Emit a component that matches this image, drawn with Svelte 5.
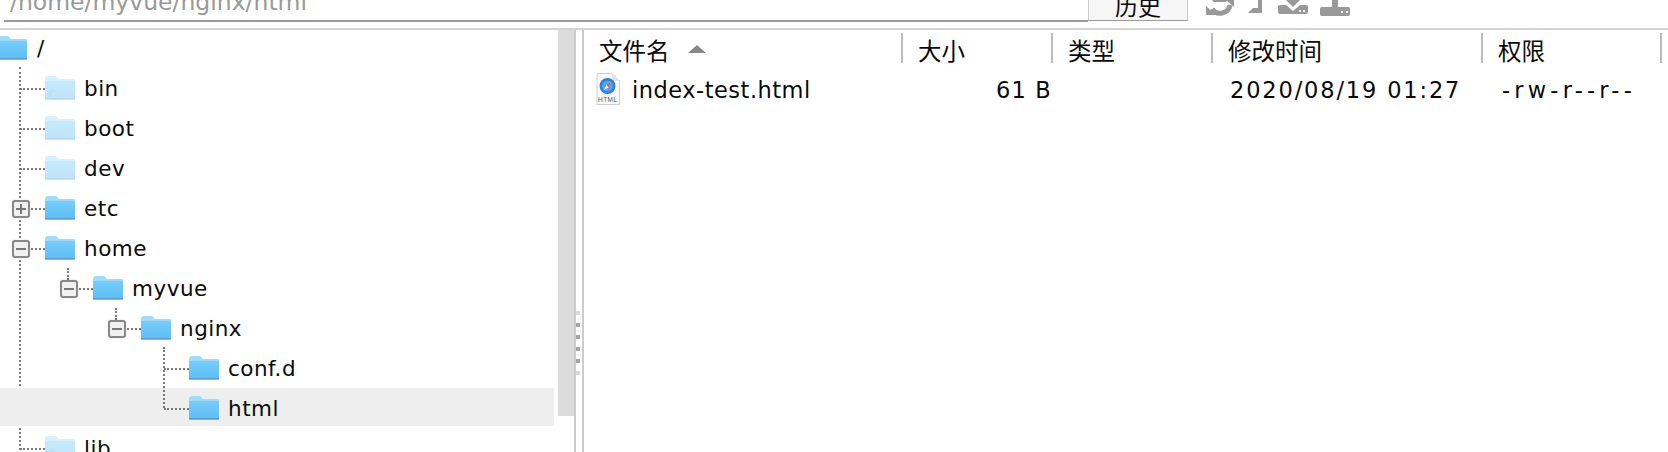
<script>
    const rows = [
        { name: "/", depth: 0, open: true },
        { name: "bin", depth: 1, faded: true, link: true },
        { name: "boot", depth: 1, faded: true },
        { name: "dev", depth: 1, faded: true },
        { name: "etc", depth: 1, box: "plus" },
        { name: "home", depth: 1, box: "minus" },
        { name: "myvue", depth: 2, box: "minus" },
        { name: "nginx", depth: 3, box: "minus" },
        { name: "conf.d", depth: 4 },
        { name: "html", depth: 4, selected: true },
        { name: "lib", depth: 1, faded: true, link: true },
    ];

    const columns = [
        { label: "文件名", width: 319, sort: true },
        { label: "大小", width: 150 },
        { label: "类型", width: 160 },
        { label: "修改时间", width: 270 },
        { label: "权限", width: 179 },
    ];
</script>

<svg class="defs" width="0" height="0">
    <defs>
        <linearGradient id="folderBody" x1="0" y1="0" x2="0" y2="1">
            <stop offset="0" stop-color="#74cdfb" />
            <stop offset="1" stop-color="#5fbef5" />
        </linearGradient>
    </defs>
</svg>

<div class="window">
    <div class="topbar">
        <div class="path"><span>/home/myvue/nginx/html</span></div>
        <div class="history">历史</div>
        <div class="tools">
            <svg width="150" height="22" viewBox="0 0 150 22">
                <!-- refresh -->
                <path d="M10 9 A10 10 0 0 0 28 5" fill="none" stroke="#999" stroke-width="5" />
                <path d="M4 6 L14 15 H4 Z" fill="#999" />
                <path d="M10 0 H26 L24 2 H12 Z" fill="#999" />
                <path d="M24 0 H32 V7 Z" fill="#999" />
                <!-- corner -->
                <path d="M56 0 H60 V13 H46 L51 8 H56 Z" fill="#999" />
                <!-- download -->
                <path d="M76 7 Q76 5 78 5 H84 L91 11 L98 5 H104 Q106 5 106 7 V12 Q106 14 104 14 H78 Q76 14 76 12 Z" fill="#999" />
                <path d="M84 0 H98 L91 7 Z" fill="#999" />
                <rect x="97" y="10" width="2" height="2" fill="#eee" />
                <rect x="101" y="10" width="2" height="2" fill="#eee" />
                <!-- upload -->
                <path d="M118 9 Q118 7 120 7 H146 Q148 7 148 9 V14 Q148 16 146 16 H120 Q118 16 118 14 Z" fill="#999" />
                <rect x="130" y="0" width="6" height="8" fill="#999" />
                <rect x="139" y="11" width="2" height="2" fill="#eee" />
                <rect x="144" y="11" width="2" height="2" fill="#eee" />
            </svg>
        </div>
    </div>

    <div class="panes">
        <div class="tree-pane">
            <div class="tree">
                <div class="trunk"></div>
                {#each rows as row}
                    <div class="row depth{row.depth}" class:selected={row.selected}>
                        {#if row.depth > 0}
                            <span class="hline"></span>
                        {/if}
                        {#if row.box}
                            <span class="box">
                                <i></i>
                                {#if row.box === "plus"}<b></b>{/if}
                            </span>
                        {/if}
                        <svg class="folder" class:faded={row.faded} width="30" height="24" viewBox="0 0 30 24">
                            <path d="M0 3 Q0 0 3 0 H10 Q12 0 13 2 L14 3 H29 Q30 3 30 4 V8 H0 Z" fill="#9fdcfb" />
                            <path d="M0 5 H29 Q30 5 30 6 V22 Q30 23.500 28.500 23.500 H1.500 Q0 23.500 0 22 Z" fill="url(#folderBody)" />
                            <rect x="0" y="22" width="30" height="1.500" fill="#4f9fd0" />
                            {#if row.link}
                                <path d="M4 23 V17 H2 L7 12 L11 15 L8 16 L6 23 Z" fill="#58b4f0" />
                            {/if}
                        </svg>
                        <span class="name">{row.name}</span>
                    </div>
                {/each}
                <div class="stub stub2"></div>
                <div class="stub stub3"></div>
                <div class="stub stub4"></div>
            </div>
            <div class="scrollbar"><div class="track"></div></div>
        </div>

        <div class="splitter">
            <div class="grip">
                {#each [0, 1, 2, 3, 4, 5] as i}
                    <span class:dim={i === 0 || i === 5}></span>
                {/each}
            </div>
        </div>

        <div class="files">
            <div class="header">
                {#each columns as col}
                    <div class="col" style="width: {col.width}px">
                        <span>{col.label}</span>
                        {#if col.sort}<span class="sort"></span>{/if}
                    </div>
                {/each}
            </div>
            <div class="file">
                <div class="cell name-cell">
                    <svg width="24" height="32" viewBox="0 0 24 32">
                        <path d="M1 0.500 H16 L23.500 8 V31.500 H1 Z" fill="#fbfbfb" stroke="#cfcfcf" />
                        <path d="M16 0.500 V8 H23.500 Z" fill="#e4e4e4" />
                        <circle cx="11.500" cy="13" r="8" fill="#2f80dc" />
                        <circle cx="11.500" cy="13" r="5.500" fill="#4ea4ee" />
                        <path d="M15 9 L12.500 14.500 L8 17 L10.500 11.500 Z" fill="#f2f2f2" />
                        <path d="M15 9 L12.500 14.500 L10.500 11.500 Z" fill="#e0533f" />
                        <text x="11.800" y="29" font-size="6.500" text-anchor="middle" fill="#555" font-family="Liberation Sans, sans-serif">HTML</text>
                    </svg>
                    <span>index-test.html</span>
                </div>
                <div class="cell size">61 B</div>
                <div class="cell type"></div>
                <div class="cell date">2020/08/19 01:27</div>
                <div class="cell perm">-rw-r--r--</div>
            </div>
        </div>
    </div>
</div>

<style>
    :global(body) {
        margin: 0;
        background: #fff;
    }

    .defs {
        position: absolute;
    }

    .window {
        width: 1668px;
        height: 452px;
        overflow: hidden;
        font-family: "DejaVu Sans", "Noto Sans CJK SC", sans-serif;
        color: #0a0a0a;
    }

    .topbar {
        display: flex;
        height: 22px;
        padding-left: 4px;
        margin-bottom: 6px;
    }

    .path {
        width: 1084px;
        height: 20px;
        overflow: hidden;
        border-bottom: 2px solid #999;
        color: #999;
        font-size: 23.500px;
    }

    .path span {
        display: block;
        margin: -14px 0 0 6px;
        line-height: 32px;
    }

    .history {
        box-sizing: border-box;
        width: 100px;
        height: 21px;
        overflow: hidden;
        border: 1px solid #ccc;
        border-top: none;
        border-bottom: 1px solid #999;
        background: #f6f6f6;
        text-align: center;
        font-size: 23px;
        line-height: 14px;
    }

    .tools {
        padding-left: 14px;
    }

    .tools svg {
        display: block;
    }

    .panes {
        display: flex;
        height: 424px;
        border-top: 2px solid #d4d4d4;
    }

    .tree-pane {
        display: flex;
        width: 574px;
        overflow: hidden;
    }

    .tree {
        position: relative;
        box-sizing: border-box;
        width: 554px;
        margin-top: -2px;
        overflow: hidden;
        font-size: 21.500px;
    }

    .scrollbar {
        width: 20px;
    }

    .track {
        height: 386px;
        margin-left: 4px;
        background: #dcdcdc;
    }

    .trunk {
        position: absolute;
        left: 19px;
        top: 39px;
        bottom: 0;
        border-left: 2px dotted #777;
    }

    .row {
        position: relative;
        display: flex;
        align-items: center;
        height: 38px;
        margin-bottom: 2px;
    }

    .row.selected {
        background: #eeeeee;
    }

    .depth0 { padding-left: 0; }
    .depth1 { padding-left: 45px; }
    .depth2 { padding-left: 93px; }
    .depth3 { padding-left: 141px; }
    .depth4 { padding-left: 189px; }

    .depth0 .folder {
        margin-left: -3px;
    }

    .depth0 .name {
        margin-left: 10px;
    }

    .folder {
        flex: none;
        margin-top: 2px;
    }

    .folder.faded {
        opacity: 0.4;
    }

    .name {
        margin-left: 9px;
        padding-top: 3px;
        letter-spacing: 0.5px;
    }

    .hline {
        position: absolute;
        top: 20px;
        width: 25px;
        border-top: 2px dotted #777;
    }

    .depth1 .hline { left: 20px; }
    .depth2 .hline { left: 68px; }
    .depth3 .hline { left: 116px; }
    .depth4 .hline { left: 164px; }

    .box {
        position: absolute;
        top: 12px;
        box-sizing: border-box;
        width: 18px;
        height: 18px;
        border: 2px solid #888;
        border-radius: 3px;
        background: #f0f0f0;
        box-shadow: 0 0 2px #ddd;
    }

    .depth1 .box { left: 12px; }
    .depth2 .box { left: 60px; }
    .depth3 .box { left: 108px; }

    .box i {
        position: absolute;
        left: 2px;
        top: 6px;
        width: 10px;
        height: 2px;
        background: #777;
    }

    .box b {
        position: absolute;
        left: 6px;
        top: 2px;
        width: 2px;
        height: 10px;
        background: #777;
    }

    .stub {
        position: absolute;
        border-left: 2px dotted #777;
    }

    .stub2 { left: 67px; top: 240px; height: 12px; }
    .stub3 { left: 115px; top: 280px; height: 12px; }
    .stub4 { left: 163px; top: 319px; height: 61px; }

    .splitter {
        box-sizing: border-box;
        width: 10px;
        border-left: 2px solid #ccc;
        border-right: 2px solid #ccc;
        padding-top: 281px;
    }

    .grip {
        display: flex;
        flex-direction: column;
        gap: 8px;
    }

    .grip span {
        width: 4px;
        height: 4px;
        background: #a4a4a4;
    }

    .grip span.dim {
        background: #d8d8d8;
    }

    .files {
        flex: 1;
    }

    .header {
        display: flex;
        padding-top: 3px;
        height: 30px;
    }

    .col {
        box-sizing: border-box;
        display: flex;
        align-items: center;
        height: 30px;
        padding-left: 15px;
        padding-top: 4px;
        border-right: 2px solid #bbb;
        font-size: 23.500px;
    }

    .sort {
        width: 0;
        height: 0;
        margin-left: 18px;
        margin-top: -2px;
        border-left: 9px solid transparent;
        border-right: 9px solid transparent;
        border-bottom: 8px solid #888;
    }

    .file {
        display: flex;
        align-items: center;
        height: 40px;
        margin-top: 6px;
        font-size: 22.500px;
        letter-spacing: 0.5px;
    }

    .cell {
        box-sizing: border-box;
        white-space: nowrap;
        padding-top: 2px;
    }

    .name-cell {
        display: flex;
        align-items: center;
        gap: 12px;
        width: 319px;
        padding-left: 12px;
    }

    .name-cell svg {
        margin-top: -2px;
    }

    .size {
        width: 149px;
        text-align: right;
        letter-spacing: 1.2px;
    }

    .type {
        width: 178px;
    }

    .date {
        width: 272px;
        letter-spacing: 1.85px;
    }

    .perm {
        letter-spacing: 4.2px;
    }
</style>
